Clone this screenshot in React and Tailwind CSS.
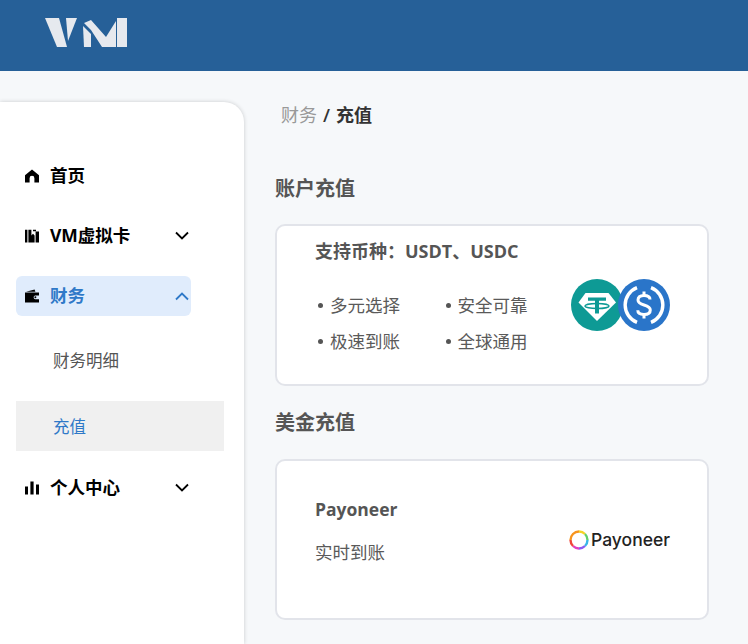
import React from 'react';

const cjk = "font-['Open_Sans','Noto_Sans_CJK_SC',sans-serif]";

const Chevron = ({ up, className }) => (
    <svg width="16" height="10" viewBox="0 0 16 10" fill="none" stroke="currentColor" strokeWidth="1.8" className={className}>
        <path d={up ? 'M2 8.5L8 2.5L14 8.5' : 'M2 1.5L8 7.5L14 1.5'} />
    </svg>
);

const HomeIcon = () => (
    <svg width="14" height="14" viewBox="0 0 14 14" fill="#000">
        <path d="M7 .6L14 6.2V13.4H9.4V9.2A2.4 2.4 0 0 0 4.6 9.2V13.4H0V6.2Z" />
    </svg>
);

const CardIcon = () => (
    <svg width="14" height="14" viewBox="0 0 14 14" fill="#000">
        <path d="M0 .8H2.4V13.6H0ZM3.4 .8H6.4V6.4L8 4.8L9.6 6.4V13.6H3.4ZM8 .8H11V2.2H8ZM10.6 2.4H14V13.6H10.6Z" />
    </svg>
);

const WalletIcon = () => (
    <svg width="14" height="14" viewBox="0 0 14 14" fill="#000">
        <path d="M1 2.8L9.6 .4L10.4 2.8Z" />
        <path fillRule="evenodd" d="M0 3.4H14V6.4H10A2 2 0 0 0 10 10.2H14V13.4H0Z" />
        <circle cx="10.4" cy="8.3" r="1" />
    </svg>
);

const ChartIcon = () => (
    <svg width="14" height="14" viewBox="0 0 14 14" fill="#000">
        <path d="M0 5.6H3V13.6H0ZM5.4 .6H8.6V13.6H5.4ZM11 3.6H14V13.6H11Z" />
    </svg>
);

const VmLogo = () => (
    <svg width="84" height="30" viewBox="0 0 84 30" fill="#e6e9ee">
        <path d="M1 0H15L23 29H13Z" />
        <path d="M22 0H33L24 23Z" />
        <path d="M39 8L47 16V29H40Z" />
        <path d="M40 5L47 2L62 19L72 3V29H58L47 12Z" />
        <path d="M73 0H83V29H73Z" />
    </svg>
);

const UsdtIcon = () => (
    <svg width="52" height="52" viewBox="0 0 52 52">
        <circle cx="26" cy="26" r="26" fill="#0e9a95" />
        <path d="M14.5 14H37.5L45 23.5L26 42L7.500 23.500Z" fill="#fff" />
        <path d="M17 18.500H35V21.800H28V25H24V21.800H17Z" fill="#0e9a95" />
        <path d="M24 24.500H28V34.500H24Z" fill="#0e9a95" />
        <ellipse cx="26" cy="27" rx="12" ry="2.600" fill="none" stroke="#0e9a95" strokeWidth="1.500" />
    </svg>
);

const UsdcIcon = () => (
    <svg width="52" height="52" viewBox="0 0 52 52" fill="none">
        <circle cx="26" cy="26" r="26" fill="#2a75c9" />
        <path d="M19 8.600A18.700 18.700 0 0 0 19 43.400M33 8.600A18.700 18.700 0 0 1 33 43.400" stroke="#fff" strokeWidth="3.400" />
        <path d="M32 20.500C32 17.800 29.500 16.500 26 16.500C22.500 16.500 20 18 20 21C20 24 22.500 25 26 26C29.500 27 32.300 28 32.300 31C32.300 34 29.500 35.500 26 35.500C22.500 35.500 19.800 34 19.800 31.300" stroke="#fff" strokeWidth="3" />
        <path d="M26 12.500V16.500M26 35.500V39.500" stroke="#fff" strokeWidth="3" />
    </svg>
);

const PayoneerRing = () => (
    <svg width="20" height="20" viewBox="0 0 20 20" fill="none" strokeWidth="2.400">
        <path d="M10 1.500A8.500 8.500 0 0 1 16 4" stroke="#f4d426" />
        <path d="M16 4A8.500 8.500 0 0 1 18.500 10" stroke="#62d06a" />
        <path d="M18.500 10A8.500 8.500 0 0 1 16 16" stroke="#38b6e8" />
        <path d="M16 16A8.500 8.500 0 0 1 10 18.500" stroke="#8a5cf0" />
        <path d="M10 18.500A8.500 8.500 0 0 1 4 16" stroke="#e040c0" />
        <path d="M4 16A8.500 8.500 0 0 1 1.500 10" stroke="#f0443a" />
        <path d="M1.500 10A8.500 8.500 0 0 1 10 1.500" stroke="#f7941d" />
    </svg>
);

const MenuItem = ({ icon, label, chevron, open, active }) => (
    <div className={`flex h-10 w-[175px] items-center rounded-md pl-[9px] pr-[1px] ${active ? 'bg-[#e0ecfc]' : ''}`}>
        <span className="mr-[11px] flex w-[14px]">{icon}</span>
        <span className={`flex-1 text-[17.500px] font-bold leading-none ${active ? 'text-[#2f79c8]' : 'text-black'}`}>{label}</span>
        {chevron && <Chevron up={open} className={active ? 'text-[#2f79c8]' : 'text-black'} />}
    </div>
);

const Bullet = ({ children }) => (
    <div className="flex items-center pl-[3px] text-[17.500px] leading-none text-[#5a5a5a]">
        <span className="mr-[7px] h-[5px] w-[5px] shrink-0 rounded-full bg-[#555]" />
        {children}
    </div>
);

export default function App() {
    return (
        <div className={`flex h-[644px] w-[748px] flex-col overflow-hidden bg-[#f6f8fa] ${cjk}`}>
            <header className="flex h-[71px] shrink-0 items-start bg-[#266098] pl-[44px] pt-[18px]">
                <VmLogo />
            </header>

            <div className="flex flex-1">
                {/* Sidebar */}
                <aside className="mt-[31px] w-[244px] shrink-0 rounded-tr-[20px] bg-white pl-4 pt-[54px] shadow-[0_0_4px_rgba(0,0,0,0.18)]">
                    <div className="flex flex-col gap-5">
                        <MenuItem icon={<HomeIcon />} label="首页" />
                        <MenuItem icon={<CardIcon />} label="VM虚拟卡" chevron />
                        <MenuItem icon={<WalletIcon />} label="财务" chevron open active />
                    </div>
                    <div className="mt-5 flex w-[208px] flex-col gap-[15px]">
                        <div className="flex h-[50px] items-center pl-[37px] text-[16.500px] text-[#555]">财务明细</div>
                        <div className="flex h-[50px] items-center bg-[#f0f0f0] pl-[37px] pt-[2px] text-[16.500px] text-[#2f79c8]">充值</div>
                    </div>
                    <div className="mt-[17px]">
                        <MenuItem icon={<ChartIcon />} label="个人中心" chevron />
                    </div>
                </aside>

                {/* Content */}
                <main className="w-[434px] shrink-0 pl-[31px] pt-[30px]">
                    <div className="flex h-7 items-center pl-[6px] text-[18px] leading-none">
                        <span className="text-[#999]">财务</span>
                        <span className="mx-[6px] font-semibold text-[#333]">/</span>
                        <span className="font-bold text-[#333]">充值</span>
                    </div>

                    <h2 className="mt-[45px] h-[30px] text-[20px] font-bold leading-[30px] text-[#555]">账户充值</h2>
                    <section className="mt-[20px] flex h-[162px] w-[434px] rounded-[10px] border-2 border-[#e2e4ea] bg-white">
                        <div className="flex-1 pl-[38px] pt-[12px]">
                            <div className="text-[18px] font-bold leading-[26px] text-[#555]">支持币种：USDT、USDC</div>
                            <div className="mt-[33px] grid w-[255px] grid-cols-2 gap-y-[18px]">
                                <Bullet>多元选择</Bullet>
                                <Bullet>安全可靠</Bullet>
                                <Bullet>极速到账</Bullet>
                                <Bullet>全球通用</Bullet>
                            </div>
                        </div>
                        <div className="mr-[37px] mt-[53px] flex h-[52px] -space-x-[5px]">
                            <UsdtIcon />
                            <UsdcIcon />
                        </div>
                    </section>

                    <h2 className="mt-[22px] h-[30px] text-[20px] font-bold leading-[30px] text-[#555]">美金充值</h2>
                    <section className="mt-[21px] flex h-[161px] w-[434px] items-center rounded-[10px] border-2 border-[#e2e4ea] bg-white">
                        <div className="flex-1 self-start pl-[38px] pt-[35px]">
                            <div className="text-[17.500px] font-bold leading-[26px] text-[#555]">Payoneer</div>
                            <div className="mt-[17px] text-[17.500px] leading-[26px] text-[#5a5a5a]">实时到账</div>
                        </div>
                        <div className="mr-[37px] flex items-center gap-[2px] font-['Inter',sans-serif] text-[17.500px] font-medium leading-none text-[#222]">
                            <PayoneerRing />
                            Payoneer
                        </div>
                    </section>
                </main>
            </div>
        </div>
    );
}
